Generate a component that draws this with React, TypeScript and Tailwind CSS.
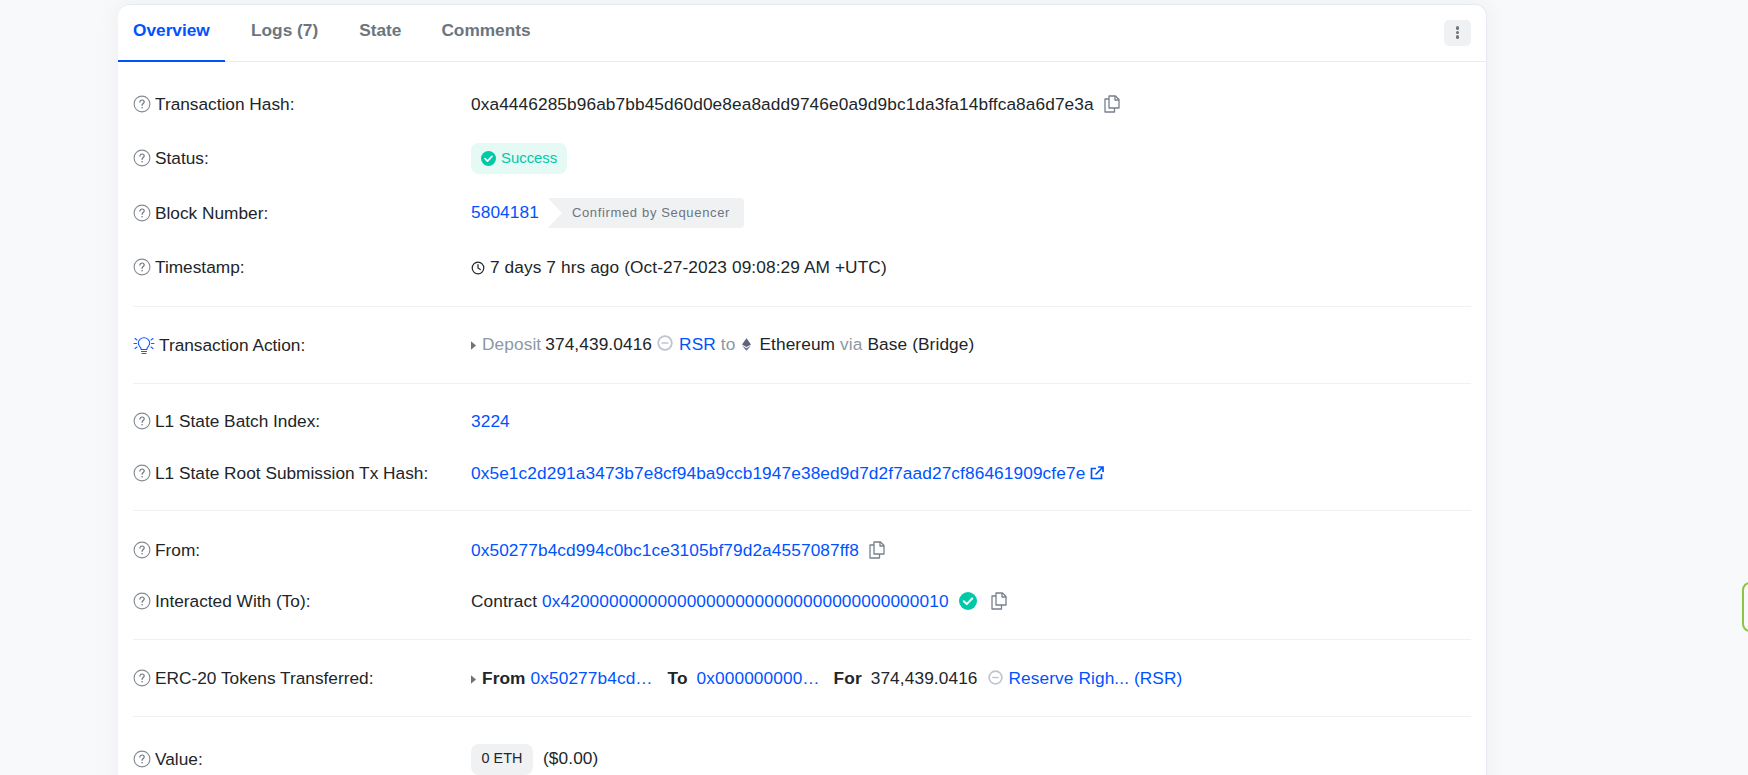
import React from "react";

const Help = () => (
  <svg viewBox="0 0 18 18" className="w-[18px] h-[18px] shrink-0" fill="none">
    <circle cx="9" cy="9" r="7.900" stroke="#858b93" strokeWidth="1.100" />
    <path d="M6.900 7.100c0-1.200 1-2.100 2.200-2.100s2.100.8 2.100 1.900c0 1.600-2.100 1.700-2.100 3.400" stroke="#6c757d" strokeWidth="1.200" strokeLinecap="round" />
    <circle cx="9.100" cy="12.800" r=".8" fill="#6c757d" />
  </svg>
);

const Bulb = () => (
  <svg viewBox="0 0 22 20" className="w-[22px] h-[20px] shrink-0" fill="none" stroke="#0f5cff" strokeWidth="1.100">
    <path d="M7.200 12.200c-1.100-1.200-1.900-2.200-1.900-4 0-3.100 2.500-5.500 5.700-5.500s5.700 2.400 5.700 5.500c0 1.800-.8 2.800-1.900 4-.7.8-1 1.400-1 2.300H8.200c0-.9-.3-1.500-1-2.300z" />
    <path d="M8.500 16.500h5M9 18.500h4M1 8.500h2.500M18.500 8.500H21M2 3.500l2 1.500M20 3.500l-2 1.500M2 13.500l2-1.500M20 13.500l-2-1.500" strokeLinecap="round" />
  </svg>
);

const Copy = () => (
  <svg viewBox="0 0 16 18" className="w-4 h-[18px] shrink-0" fill="none" stroke="#77808c" strokeWidth="1.300">
    <path d="M5 1h6.500L15 4.500V13H5z" strokeLinejoin="round" />
    <path d="M11 1v4h4" strokeLinejoin="round" />
    <path d="M5 4H1v13h9.500v-4" strokeLinejoin="round" />
  </svg>
);

const Check = ({ size }: { size: string }) => (
  <svg viewBox="0 0 16 16" className={size + " shrink-0"}>
    <circle cx="8" cy="8" r="8" fill="#00c9a7" />
    <path d="M4.300 8.200l2.600 2.600 4.800-5" fill="none" stroke="#fff" strokeWidth="1.800" strokeLinecap="round" strokeLinejoin="round" />
  </svg>
);

const Clock = () => (
  <svg viewBox="0 0 14 14" className="w-[14px] h-[14px] shrink-0 mr-[5px] mt-[1px]" fill="none" stroke="#212529" strokeWidth="1.200">
    <circle cx="7" cy="7" r="5.800" />
    <path d="M7 3.500V7l2.300 1.500" strokeLinecap="round" />
  </svg>
);

const External = () => (
  <svg viewBox="0 0 14 14" className="w-[14px] h-[14px] shrink-0" fill="none" stroke="#0052ff" strokeWidth="1.700">
    <path d="M6 2.500H1.500v10h10V8" />
    <path d="M5.500 8.500L12.500 1.500M8 1h5v5" />
  </svg>
);

const Caret = () => (
  <svg viewBox="0 0 6 10" className="w-[5px] h-[9px] shrink-0 mr-[6px] mt-[2px]">
    <path d="M0 0l6 5-6 5z" fill="#6c757d" />
  </svg>
);

const Token = ({ size }: { size: string }) => (
  <svg viewBox="0 0 16 16" className={size + " shrink-0"} fill="none">
    <circle cx="8" cy="8" r="6.800" stroke="#bdc3cf" strokeWidth="1.800" />
    <path d="M4.500 8h7" stroke="#bdc3cf" strokeWidth="1.500" />
  </svg>
);

const Eth = () => (
  <svg viewBox="0 0 10 14" className="w-[9px] h-[13px] shrink-0">
    <path d="M5 0L0 7l5 2.800L10 7z" fill="#5f6479" />
    <path d="M0 8.200L5 14l5-5.800-5 3z" fill="#6d7288" />
  </svg>
);

const A = ({ children, className = "" }: { children: React.ReactNode; className?: string }) => (
  <span className={"text-[#0052ff] " + className}>{children}</span>
);

const Row = ({
  label,
  h,
  icon,
  children,
}: {
  label: string;
  h: string;
  icon?: React.ReactNode;
  children: React.ReactNode;
}) => (
  <div className={"flex items-center " + h}>
    <div className="w-[338px] shrink-0 flex items-center gap-[4px]">
      {icon ?? <Help />}
      <span className="mt-[1px]">{label}</span>
    </div>
    <div className="flex items-center whitespace-nowrap tracking-[0.1px]">{children}</div>
  </div>
);

const Divider = ({ className }: { className: string }) => <div className={"h-px bg-[#eff1f5] " + className} />;

export default function App() {
  return (
    <div className="relative h-screen overflow-hidden bg-[#f8f9fa] font-['Liberation_Sans',Arial,sans-serif]">
      <div className="ml-[118px] mt-[4px] w-[1369px] h-[900px] bg-white rounded-t-[12px] border-r border-t border-[#e7eaf3] shadow-[0_0_24px_rgba(189,197,209,0.2)] text-[17.28px] text-[#212529]">
        <div className="flex items-center justify-between h-[57px] border-b border-[#e9ebf3] pr-[15px]">
          <div className="flex h-full font-bold text-[#6c757d]">
            <div className="w-[107px] h-[57px] pl-[15px] pt-[13px] border-b-2 border-[#0052ff] text-[#0052ff]">Overview</div>
            <div className="ml-[26px] pt-[13px]">Logs (7)</div>
            <div className="ml-[41px] pt-[13px]">State</div>
            <div className="ml-[40px] pt-[13px]">Comments</div>
          </div>
          <div className="w-[27px] h-[26px] mt-[-1px] rounded-[5px] bg-[#f0f1f3] flex flex-col items-center justify-center gap-[1px]">
            <span className="w-[3.500px] h-[3.500px] rounded-full bg-[#6c757d]" />
            <span className="w-[3.500px] h-[3.500px] rounded-full bg-[#6c757d]" />
            <span className="w-[3.500px] h-[3.500px] rounded-full bg-[#6c757d]" />
          </div>
        </div>

        <div className="pl-[15px] pr-[15px] pt-[15px]">
          <Row label="Transaction Hash:" h="h-[54px]">
            <span className="mt-[1px]">0xa4446285b96ab7bb45d60d0e8ea8add9746e0a9d9bc1da3fa14bffca8a6d7e3a</span>
            <span className="ml-[10px]"><Copy /></span>
          </Row>
          <Row label="Status:" h="h-[55px]">
            <span className="flex items-center gap-[5px] w-[96px] h-[31px] pl-[10px] rounded-[8px] bg-[#e5f9f5] text-[#00c9a7] text-[14.88px] tracking-normal">
              <Check size="w-[15px] h-[15px]" />
              Success
            </span>
          </Row>
          <Row label="Block Number:" h="h-[55px]">
            <A className="-mt-[1px]">5804181</A>
            <span className="ml-[9px] w-[196px] h-[30px] pl-[24px] -mt-[1px] flex items-center bg-[#f0f1f3] rounded-r-[4px] text-[13px] tracking-[0.65px] text-[#6c757d] font-medium [clip-path:polygon(0_0,100%_0,100%_100%,0_100%,14px_50%)]">
              Confirmed by Sequencer
            </span>
          </Row>
          <Row label="Timestamp:" h="h-[53px]">
            <Clock />
            <span className="mt-[1px]">7 days 7 hrs ago (Oct-27-2023 09:08:29 AM +UTC)</span>
          </Row>

          <Divider className="mt-[12px] mb-[11px]" />
          <Row label="Transaction Action:" h="h-[54px]" icon={<Bulb />}>
            <Caret />
            <span className="text-[#8c98a4]">Deposit</span>
            <span className="ml-[4px]">374,439.0416</span>
            <span className="ml-[5px] -mt-[4px]"><Token size="w-[16px] h-[16px]" /></span>
            <A className="ml-[6px]">RSR</A>
            <span className="ml-[5px] text-[#8c98a4]">to</span>
            <span className="ml-[7px] mr-[8px]"><Eth /></span>
            <span>Ethereum</span>
            <span className="ml-[5px] text-[#8c98a4]">via</span>
            <span className="ml-[5px]">Base (Bridge)</span>
          </Row>

          <Divider className="mt-[11px] mb-[11px]" />
          <Row label="L1 State Batch Index:" h="h-[52px]">
            <A className="mt-[1px]">3224</A>
          </Row>
          <Row label="L1 State Root Submission Tx Hash:" h="h-[52px]">
            <A className="mt-[1px]">0x5e1c2d291a3473b7e8cf94ba9ccb1947e38ed9d7d2f7aad27cf86461909cfe7e</A>
            <span className="ml-[5px]"><External /></span>
          </Row>

          <Divider className="mt-[11px] mb-[13px]" />
          <Row label="From:" h="h-[52px]">
            <A className="mt-[1px]">0x50277b4cd994c0bc1ce3105bf79d2a4557087ff8</A>
            <span className="ml-[10px]"><Copy /></span>
          </Row>
          <Row label="Interacted With (To):" h="h-[51px]">
            <span className="mt-[1px]">Contract</span>
            <A className="ml-[5px] mt-[1px]">0x4200000000000000000000000000000000000010</A>
            <span className="ml-[10px]"><Check size="w-[18px] h-[18px]" /></span>
            <span className="ml-[14px]"><Copy /></span>
          </Row>

          <Divider className="mt-[12px] mb-[12px]" />
          <Row label="ERC-20 Tokens Transferred:" h="h-[53px]">
            <Caret />
            <span className="font-bold">From</span>
            <A className="ml-[5px] w-[123px]">0x50277b4cd…</A>
            <span className="ml-[14px] font-bold">To</span>
            <A className="ml-[9px] w-[125px]">0x000000000…</A>
            <span className="ml-[12px] font-bold">For</span>
            <span className="ml-[9px]">374,439.0416</span>
            <span className="ml-[10px] -mt-[2px]"><Token size="w-[15px] h-[15px]" /></span>
            <A className="ml-[6px]">Reserve Righ... (RSR)</A>
          </Row>

          <Divider className="mt-[11px] mb-[15px]" />
          <Row label="Value:" h="h-[54px]">
            <span className="flex items-center justify-center w-[62px] h-[31px] rounded-[8px] bg-[#f0f1f3] text-[14.4px] tracking-normal">0 ETH</span>
            <span className="ml-[10px]">($0.00)</span>
          </Row>
        </div>
      </div>
      <div className="absolute left-[1742px] top-[582px] w-[20px] h-[50px] rounded-[8px] border-2 border-[#8cc63f]" />
    </div>
  );
}
